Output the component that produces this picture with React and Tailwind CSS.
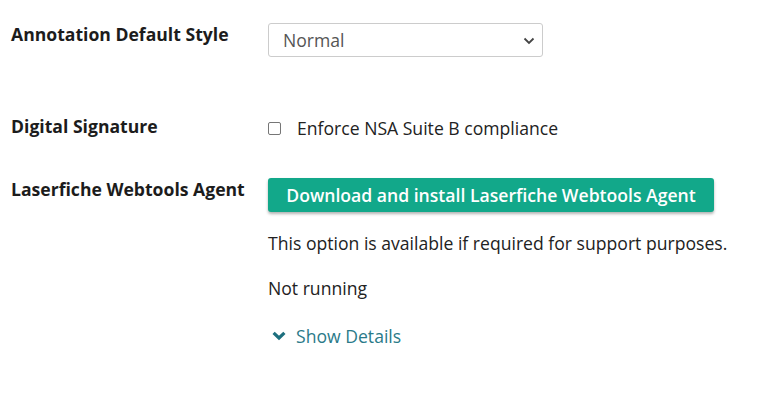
export default function App() {
  return (
    <div className="w-[764px] h-[416px] bg-white pl-[11px] pt-[22px] font-['Open_Sans',sans-serif] text-[17.6px] leading-6 text-[#222]">
      <div className="flex items-start">
        <div className="w-[257px] font-bold text-[#1c1c1c]">Annotation Default Style</div>
        <div className="mt-[1px] relative w-[275px] h-[34px] border border-[#cccccc] rounded-[3px] bg-white flex items-center pl-[14px] text-[#555]">
          <span>Normal</span>
          <svg className="absolute right-[7px] top-[13px]" width="12" height="8" viewBox="0 0 12 8">
            <path d="M1.5 1.5 L6 6 L10.5 1.5" fill="none" stroke="#444" strokeWidth="1.8" />
          </svg>
        </div>
      </div>

      <div className="flex items-start mt-[57px]">
        <div className="w-[257px] font-bold text-[#1c1c1c]">Digital Signature</div>
        <div className="mt-[2px] flex items-center">
          <span className="w-[13px] h-[13px] border border-[#767676] rounded-[2px] bg-white"></span>
          <span className="ml-[16px]">Enforce NSA Suite B compliance</span>
        </div>
      </div>

      <div className="flex items-start mt-[37px]">
        <div className="w-[257px] font-bold text-[#1c1c1c]">Laserfiche Webtools Agent</div>
        <div className="mt-[1px] flex flex-col items-start">
          <button className="h-[34px] w-[446px] flex items-center justify-center bg-[#12a88a] text-white font-semibold rounded-[3px] shadow-[0_2px_3px_rgba(0,0,0,0.3)] leading-6">
            Download and install Laserfiche Webtools Agent
          </button>
          <p className="mt-[19px]">This option is available if required for support purposes.</p>
          <p className="mt-[21px]">Not running</p>
          <div className="mt-[24px] flex items-center text-[#2a7a89]">
            <svg className="ml-[4px]" width="14" height="10" viewBox="0 0 14 10">
              <path d="M1.6 1.8 L7 7 L12.4 1.8" fill="none" stroke="#1d6f7e" strokeWidth="3.2" />
            </svg>
            <span className="ml-[10px]">Show Details</span>
          </div>
        </div>
      </div>
    </div>
  );
}
